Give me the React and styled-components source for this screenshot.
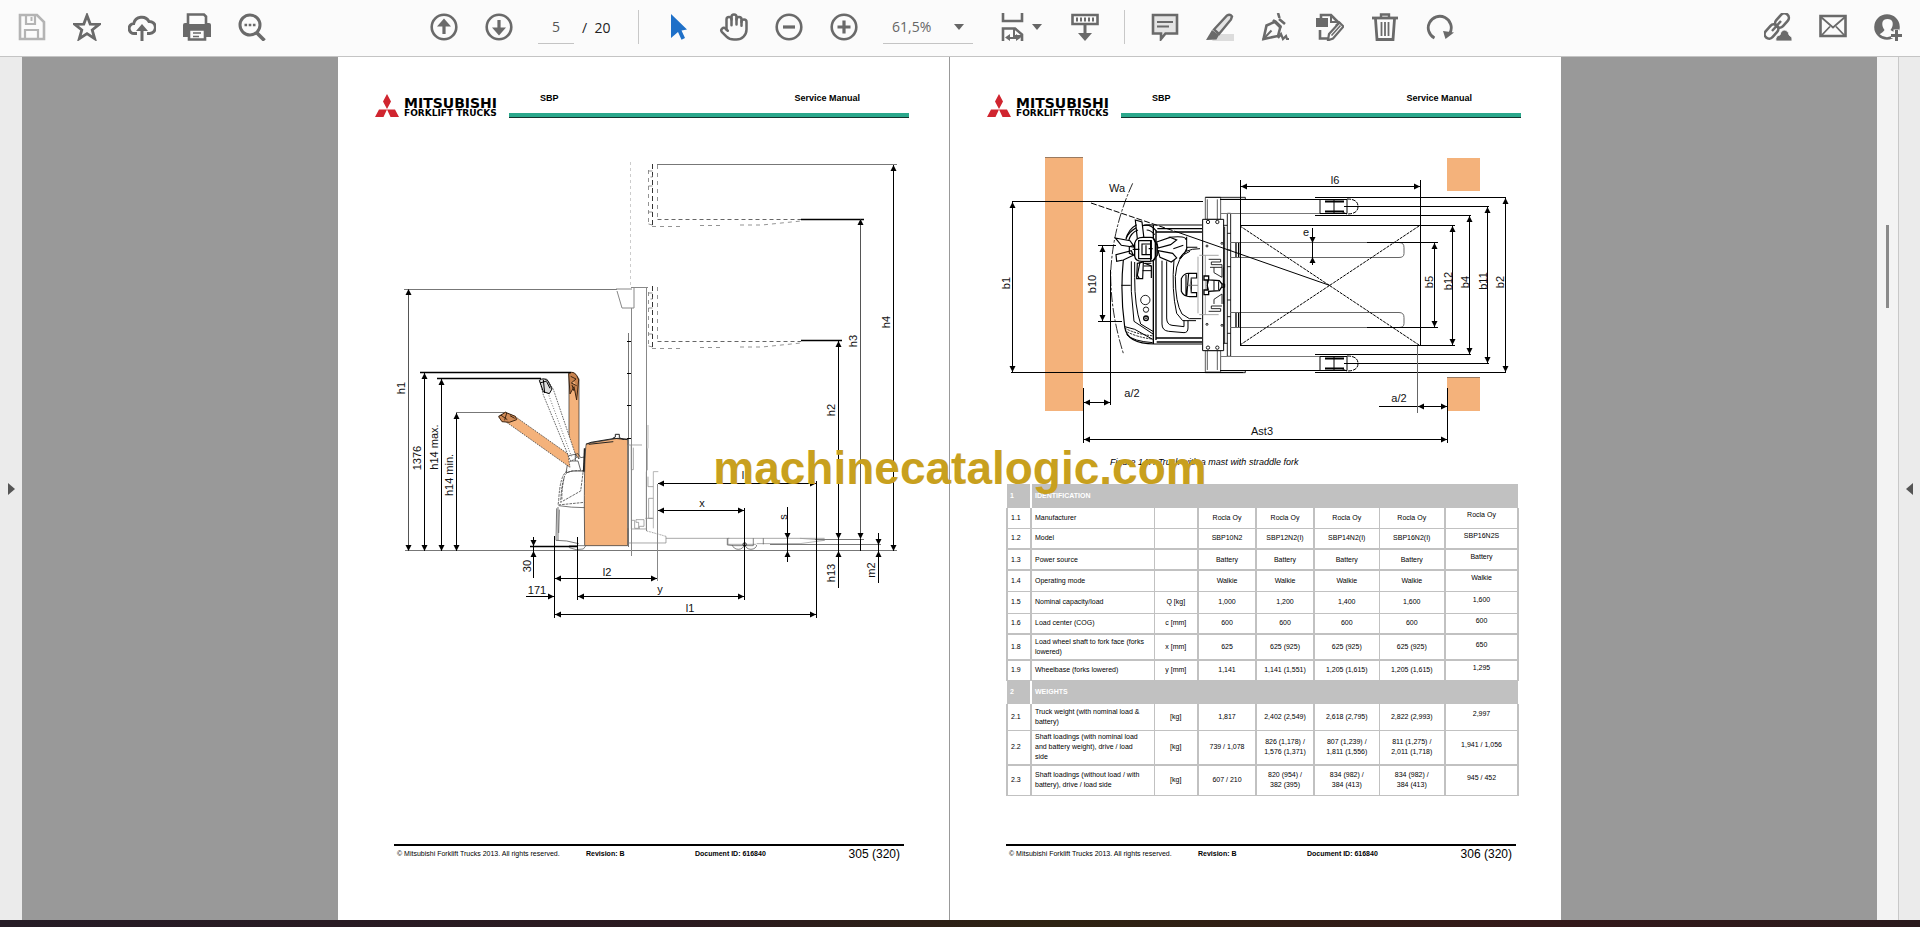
import React, { useState } from 'react';
import styled, { createGlobalStyle } from 'styled-components';
import { Hand } from 'lucide-react';

const specRows = [
  { section: '1', title: 'IDENTIFICATION' },
  { no: '1.1', h: 20, thin: true, name: 'Manufacturer', unit: '', values: ['Rocla Oy', 'Rocla Oy', 'Rocla Oy', 'Rocla Oy', 'Rocla Oy'] },
  { no: '1.2', h: 21, name: 'Model', unit: '', values: ['SBP10N2', 'SBP12N2(I)', 'SBP14N2(I)', 'SBP16N2(I)', 'SBP16N2S'] },
  { no: '1.3', h: 21, name: 'Power source', unit: '', values: ['Battery', 'Battery', 'Battery', 'Battery', 'Battery'] },
  { no: '1.4', h: 21, thin: true, name: 'Operating mode', unit: '', values: ['Walkie', 'Walkie', 'Walkie', 'Walkie', 'Walkie'] },
  { no: '1.5', h: 22, thin: true, name: 'Nominal capacity/load', unit: 'Q [kg]', values: ['1,000', '1,200', '1,400', '1,600', '1,600'] },
  { no: '1.6', h: 21, name: 'Load center (COG)', unit: 'c [mm]', values: ['600', '600', '600', '600', '600'] },
  { no: '1.8', h: 26, name: 'Load wheel shaft to fork face (forks\nlowered)', unit: 'x [mm]', values: ['625', '625 (925)', '625 (925)', '625 (925)', '650'] },
  { no: '1.9', h: 20, thin: true, name: 'Wheelbase (forks lowered)', unit: 'y [mm]', values: ['1,141', '1,141 (1,551)', '1,205 (1,615)', '1,205 (1,615)', '1,295'] },
  { section: '2', title: 'WEIGHTS' },
  { no: '2.1', h: 26, thin: true, name: 'Truck weight (with nominal load &\nbattery)', unit: '[kg]', values: ['1,817', '2,402 (2,549)', '2,618 (2,795)', '2,822 (2,993)', '2,997'] },
  { no: '2.2', h: 35, name: 'Shaft loadings (with nominal load\nand battery weight), drive / load\nside', unit: '[kg]', values: ['739 / 1,078', '826 (1,178) /\n1,576 (1,371)', '807 (1,239) /\n1,811 (1,556)', '811 (1,275) /\n2,011 (1,718)', '1,941 / 1,056'] },
  { no: '2.3', h: 30, thin: true, name: 'Shaft loadings (without load / with\nbattery), drive / load side', unit: '[kg]', values: ['607 / 210', '820 (954) /\n382 (395)', '834 (982) /\n384 (413)', '834 (982) /\n384 (413)', '945 / 452'] },
];

const icons = {
  save: (
    <g stroke="#b4b4b4" fill="none" strokeWidth="2.6">
      <path d="M2 2h17l7 7v17H2z" />
      <path d="M8 2v9h9V2M7 26v-9h13v9" strokeWidth="2.2" />
      <path d="M13.500 4v4" strokeWidth="2" />
    </g>
  ),
  star: <path d="M14 2.500l3.200 8.600 9 .3-7 5.600 2.500 8.700L14 20.600l-7.700 5.100L8.800 17l-7-5.600 9-.3z" strokeWidth="2.800" />,
  cloud: (
    <g>
      <path d="M9 20.500H6.500a5 5 0 0 1-.8-10A8.300 8.300 0 0 1 21 8.500a6 6 0 0 1 .8 12H19" strokeWidth="3" />
      <path d="M14 28V15" strokeWidth="3" />
      <path d="M14 11l6 7H8z" fill="#6a6a6a" stroke="none" />
    </g>
  ),
  print: (
    <g>
      <path d="M0 12q0-2 2-2h24q2 0 2 2v12H0z" fill="#6a6a6a" stroke="none" />
      <path d="M5 11V1.500h16l2 2V11" fill="#fbfbfb" strokeWidth="2.600" />
      <path d="M6 16.500h16v10H6z" fill="#fbfbfb" strokeWidth="2.600" />
      <path d="M10 20h8M10 23.500h6" strokeWidth="1.600" />
    </g>
  ),
  find: (
    <g>
      <circle cx="12" cy="12" r="10" strokeWidth="3" />
      <path d="M18.500 19.500l8 8" strokeWidth="3.600" />
      <path d="M6.500 12h2.600M10.700 12h2.600M14.900 12h2.600" strokeWidth="2.600" />
    </g>
  ),
  up: (
    <g>
      <circle cx="14" cy="14" r="12.300" strokeWidth="2.600" />
      <path d="M14 21v-9" strokeWidth="3.200" />
      <path d="M14 5.500l7 8H7z" fill="#6a6a6a" stroke="none" />
    </g>
  ),
  down: (
    <g>
      <circle cx="14" cy="14" r="12.300" strokeWidth="2.600" />
      <path d="M14 7v9" strokeWidth="3.200" />
      <path d="M14 22.500l7-8H7z" fill="#6a6a6a" stroke="none" />
    </g>
  ),
  pointer: <path d="M6 1l16 15.500-5.500 1 3.500 7.500-3.500 1.700L13 19l-7 6z" fill="#1f70c8" stroke="none" />,
  minus: (
    <g>
      <circle cx="14" cy="14" r="12.300" strokeWidth="2.600" />
      <path d="M8 14h12" strokeWidth="3.200" />
    </g>
  ),
  plus: (
    <g>
      <circle cx="14" cy="14" r="12.300" strokeWidth="2.600" />
      <path d="M7.500 14h13M14 7.500v13" strokeWidth="3.200" />
    </g>
  ),
  fit: (
    <g>
      <path d="M4 0v8h19V0" strokeWidth="2.600" />
      <path d="M4 28V15.500h12l7 6V28" strokeWidth="2.600" />
      <path d="M15 15v8h8" strokeWidth="2" />
      <path d="M8 25h11" strokeWidth="2" />
      <path d="M11 21v7l-5-3.500zM17 21v7l5-3.500z" fill="#6a6a6a" stroke="none" />
    </g>
  ),
  scrolling: (
    <g>
      <path d="M1.500 2h25v9h-25z" strokeWidth="2.600" />
      <path d="M6 4.500v4M10 4.500v4M14 4.500v4M18 4.500v4M22 4.500v4" strokeWidth="2" />
      <path d="M14 12v10" strokeWidth="3" />
      <path d="M14 28l-7-8h14z" fill="#6a6a6a" stroke="none" />
    </g>
  ),
  comment: (
    <g>
      <path d="M2 2h24v18.500H14.500L10 26v-5.500H2z" fill="#e4e4e4" strokeWidth="2.600" />
      <path d="M6 9h16M6 13.500h12" strokeWidth="1.800" />
    </g>
  ),
  highlight: (
    <g>
      <path d="M11 21h17v7H6z" fill="#dcdcdc" stroke="none" />
      <path d="M8 16.500L21 2.500q3-2 5 1l-1 3-12 14.500z" fill="#e4e4e4" strokeWidth="2.400" />
      <path d="M6 17l7 5-2.500 4.500L0 27z" fill="#6a6a6a" stroke="none" />
    </g>
  ),
  sign: (
    <g>
      <path d="M2.500 26l3-13.500 9-4 5 5L17 23z" strokeWidth="2.600" />
      <path d="M2 26.500l8.500-9" strokeWidth="2" />
      <path d="M17 0l1.500 5M12 7l8 8M18 6l6 5" strokeWidth="2.600" />
      <path d="M17 25l3-4 2 5 3-3 1 3h2" strokeWidth="2.200" />
    </g>
  ),
  edit: (
    <g>
      <path d="M5 6V2h10l8 8-3 3M4 17v8.500h8" strokeWidth="2.600" />
      <path d="M0 5h12v9H0z" fill="#6a6a6a" stroke="none" />
      <path d="M15 2v7h7" strokeWidth="2" />
      <path d="M13 21L23.500 9.500l4 4L17 25.500l-5 1.800z" fill="#fbfbfb" strokeWidth="2.200" />
      <path d="M15.500 22.500l9-10" strokeWidth="1.600" />
    </g>
  ),
  trash: (
    <g>
      <path d="M1 5h26" strokeWidth="2.800" />
      <path d="M10 4V1.500h8V4" strokeWidth="2.400" />
      <path d="M4.500 6l1.500 20.500h16L23.500 6" strokeWidth="2.800" />
      <path d="M10.500 9v14M14 9v14M17.500 9v14" strokeWidth="1.800" />
    </g>
  ),
  rotate: (
    <g>
      <path d="M8.500 25A11.500 11.500 0 1 1 24 20" strokeWidth="2.800" />
      <path d="M17 18l11 1.500-8.500 6.500z" fill="#6a6a6a" stroke="none" />
    </g>
  ),
  link: (
    <g>
      <rect x="10" y="3" width="16" height="9" rx="4.500" transform="rotate(-48 18 7.500)" strokeWidth="2.600" />
      <rect x="-.5" y="14" width="16" height="9" rx="4.500" transform="rotate(-48 7.500 18.500)" strokeWidth="2.600" />
      <path d="M8 18L17 8" strokeWidth="2.400" />
      <path d="M12 28q-1-5 4-6 1-5 5-5 4 1 4 5 4 2 3 6z" fill="#6a6a6a" stroke="#fbfbfb" strokeWidth=".8" />
    </g>
  ),
  mail: (
    <g>
      <path d="M1.500 3h25v20h-25z" strokeWidth="2.600" />
      <path d="M2 4l12 10.500L26 4M2 23l9-9.500M26 23l-9-9.500" strokeWidth="1.800" />
    </g>
  ),
  user: (
    <g>
      <circle cx="13" cy="14" r="11.500" strokeWidth="2.600" />
      <path d="M1.500 14a11.500 11.500 0 0 1 23 0q0 4-2 6-5-2-6-3 3-4 2-8-1-3-5-3t-5 3q-1 4 2 8-1 2-6 5-3-4-3-8z" fill="#6a6a6a" stroke="none" />
      <path d="M22.500 16.500v11M17 22h11" stroke="#fbfbfb" strokeWidth="6" />
      <path d="M22.500 17v11M17 22.500h11" strokeWidth="3" />
    </g>
  ),
};

function Tool({ name, label, disabled }) {
  return (
    <ToolButton type="button" aria-label={label} disabled={disabled}>
      <svg width="28" height="28" viewBox="0 0 28 28" fill="none" stroke="#6a6a6a">
        {icons[name]}
      </svg>
    </ToolButton>
  );
}

function Caret() {
  return (
    <svg width="10" height="6" viewBox="0 0 10 6">
      <path d="M0 0h10L5 6z" fill="#666" />
    </svg>
  );
}

function Toolbar() {
  const [page, setPage] = useState('5');
  const [zoom, setZoom] = useState('61,5%');

  return (
    <Bar>
      <Group>
        <Tool name="save" label="Save" disabled />
        <Tool name="star" label="Add to favourites" />
        <Tool name="cloud" label="Upload to cloud" />
        <Tool name="print" label="Print" />
        <Tool name="find" label="Find" />
      </Group>
      <MainGroup>
        <Tool name="up" label="Previous page" />
        <Tool name="down" label="Next page" />
        <PageInput aria-label="Page number" value={page} onChange={(e) => setPage(e.target.value)} />
        <PageTotal>/&nbsp; 20</PageTotal>
        <Separator />
        <Tool name="pointer" label="Select" />
        <ToolButton type="button" aria-label="Hand tool">
          <Hand size={30} color="#6a6a6a" strokeWidth={2} />
        </ToolButton>
        <Tool name="minus" label="Zoom out" />
        <Tool name="plus" label="Zoom in" />
        <ZoomBox>
          <select aria-label="Zoom" value={zoom} onChange={(e) => setZoom(e.target.value)}>
            <option>61,5%</option>
            <option>100%</option>
          </select>
          <Caret />
        </ZoomBox>
        <FitButton type="button" aria-label="Fit page">
          <svg width="28" height="28" viewBox="0 0 28 28" fill="none" stroke="#6a6a6a">
            {icons.fit}
          </svg>
          <Caret />
        </FitButton>
        <Tool name="scrolling" label="Page display" />
        <Separator />
        <Tool name="comment" label="Comment" />
        <Tool name="highlight" label="Highlight" />
        <Tool name="sign" label="Sign" />
        <Tool name="edit" label="Fill in form" />
        <Tool name="trash" label="Delete" />
        <Tool name="rotate" label="Rotate" />
      </MainGroup>
      <EndGroup>
        <Tool name="link" label="Share link" />
        <Tool name="mail" label="Send by email" />
        <Tool name="user" label="Invite people" />
      </EndGroup>
    </Bar>
  );
}

function Head({ x, y, dir }) {
  const turn = { up: 0, right: 90, down: 180, left: 270 }[dir];
  return <path d="M0 0l3 6h-6z" fill="#000" stroke="none" transform={`translate(${x} ${y}) rotate(${turn})`} />;
}

// vertical and horizontal dimension lines with a head at each end
function VDim({ x, y1, y2 }) {
  return (
    <g>
      <path d={`M${x} ${y1}V${y2}`} />
      <Head x={x} y={y1} dir="up" />
      <Head x={x} y={y2} dir="down" />
    </g>
  );
}

function HDim({ y, x1, x2 }) {
  return (
    <g>
      <path d={`M${x1} ${y}H${x2}`} />
      <Head x={x1} y={y} dir="left" />
      <Head x={x2} y={y} dir="right" />
    </g>
  );
}

function Label({ x, y, up, children }) {
  return (
    <DrawingText x={x} y={y} transform={up ? `rotate(-90 ${x} ${y})` : undefined}>
      {children}
    </DrawingText>
  );
}

function RaisedCarriage({ y }) {
  return (
    <g transform={`translate(0 ${y})`} stroke="#666">
      <path d="M652.500 0v63" stroke="#333" strokeDasharray="5 3" />
      <path d="M657.500 1v54M648.500 6v54M648.500 7h4v6h-4M648.500 22h4M648.500 48h4M648.500 60l4 1" strokeDasharray="4 4" strokeWidth=".7" />
      <path d="M657.500 55.500H801" strokeDasharray="4 3" />
      <path d="M652 62.500h32M700 61.500h23M740 61h22l39-4" strokeDasharray="4 4" strokeWidth=".7" />
    </g>
  );
}

function SideView() {
  return (
    <Drawing viewBox="338 150 611 480" role="img" aria-label="Side view dimensions">
      <path d="M404 289.500H617M405 550.500H897M657 164.500H897M456 412.500H506" stroke="#777" />
      <path d="M630.500 162V288" stroke="#ccc" strokeDasharray="3 3" />
      <RaisedCarriage y={164} />
      <RaisedCarriage y={286} />
      <g stroke="#888">
        <path d="M616 289h16M617 291l5 17h12v-20M631 287.500h17" />
        <path d="M631.500 308V556M646.500 288V531" />
        <path d="M628.500 333V547" stroke="#777" />
      </g>
      <path d="M627 341.500h4M627 373.500h4M627 405.500h4M627 438.500h4" />

      <g transform="translate(490 365) scale(.3333)" strokeWidth="2.200">
        <path d="M237 26q14-10 30 16v240l-30-40z" fill="#f4b27b" stroke="#333" />
        <path d="M236 25q20-12 30 20l-6 60-8-40-12 22zM242 34l16 8-14 12 16 8M246 60l6 18" strokeWidth="3" stroke="#3b2412" fill="#c8834f" />
        <path d="M26 154l20-13 30 14 158 112 6 40L50 172z" fill="#f4b27b" stroke="#333" strokeDasharray="5 3" />
        <path d="M26 155l20-13 30 12 4 10-22 8-22-2zM32 150l20 14M50 144l-6 22M60 152l14 8" strokeWidth="3" stroke="#3b2412" fill="#d28c58" />
        <path d="M150 50l20-9 20 32 70 206-18 10L160 90z" stroke="#333" fill="#fff" strokeDasharray="5 3" />
        <path d="M174 84l70 190" stroke="#444" strokeDasharray="3 5" />
        <path d="M148 46q14-10 26 2l12 24-8 14-18-6zM150 54l20-6M160 44l4 40M170 50l10 20" strokeWidth="3" fill="#ddd" />
        <path d="M236 272l28-6 8 12 12-2v42h-38l-18 6 4-24M240 288h24l8 28M256 268v20" stroke="#333" />
        <path d="M232 318q-22 10-26 90l-2 12 80-8M284 318q-48-4-58 10-12 28-14 84l60-34 8-62M222 340q-8 40-6 64" stroke="#333" strokeDasharray="8 3" />
        <path d="M204 426v100M284 428q-40 0-78-6M208 434l-2 70M200 430l-2 96 32 2 36 8" stroke="#444" />
        <path d="M284 542l-1-110q0-170 6-196l94-16 30 2v320z" fill="#f4b27b" stroke="#333" />
        <path d="M289 238l14-6 72-12 38 4M368 220l8-4v-8h12v10l14 6M296 238l74-8" stroke="#222" strokeWidth="3" fill="none" />
        <path d="M284 250l-3 70" strokeWidth="5" stroke="#222" />
        <path d="M238 542h50l-8 10q-22 6-42-4z" fill="#fff" stroke="#555" />
        <path d="M414 240h42M424 240v74h6v-66M414 240v250M424 492h45V320M424 240v252M472 250v66M426 466h8v24h12v-18h-8v-8h24v20h-14v8M466 460h22M474 335v30h16M490 400h-14v60h14" stroke="#888" />
        <path d="M474 180v70M505 320h-15v170" stroke="#999" />
        <path d="M416 534h112v-20l-58-16M528 520h190M714 520v18h84M714 520h290M800 536h130" stroke="#888" />
        <path d="M474 500l54 14" stroke="#fff" strokeWidth="3" strokeDasharray="4 4" />
        <path d="M712 520v20l18 2h60v-22M820 520v18M728 540a17 13 0 0 0 34 0M766 540a17 13 0 0 0 34 0" stroke="#555" />
        <path d="M930 520l74 6-74 10" stroke="#999" />
        <circle cx="764" cy="538" r="5" />
      </g>

      <path d="M801 219.500H864M801 340.500H842M420 372.500H571M437 378.500H541M530 546.500H578" strokeWidth="1.500" />
      <path d="M815 539.500H864M770 544.500H881" stroke="#777" />
      <path d="M554.500 536V618M577.500 537V600M744.500 508V600M816.500 481V618" />
      <path d="M657.500 484V581" stroke="#888" />
      <g stroke="#555">
        <VDim x={408.5} y1={289} y2={551} />
        <VDim x={860.5} y1={219} y2={539} />
      </g>
      <VDim x={424.5} y1={373} y2={551} />
      <VDim x={441.5} y1={379} y2={551} />
      <VDim x={456.5} y1={413} y2={551} />
      <VDim x={893.5} y1={165} y2={551} />
      <VDim x={838.5} y1={341} y2={539} />
      <path d="M838.500 539V588M787.500 507V562M878.500 533V583M533.500 537V578M526 596.500H554M860.500 539V551" />
      <Head x={838.5} y={551} dir="up" />
      <Head x={787.5} y={539} dir="down" />
      <Head x={787.5} y={551} dir="up" />
      <Head x={878.5} y={545} dir="down" />
      <Head x={878.5} y={551} dir="up" />
      <Head x={533.5} y={546} dir="down" />
      <Head x={533.5} y={551} dir="up" />
      <Head x={554} y={596.5} dir="right" />
      <HDim y={483.5} x1={658} x2={816} />
      <HDim y={510.5} x1={658} x2={744} />
      <HDim y={578.5} x1={555} x2={657} />
      <HDim y={596.5} x1={578} x2={744} />
      <HDim y={614.5} x1={555} x2={816} />

      <Label x={405} y={388} up>h1</Label>
      <Label x={421} y={458} up>1376</Label>
      <Label x={438} y={447} up>h14 max.</Label>
      <Label x={453} y={475} up>h14 min.</Label>
      <Label x={835} y={410} up>h2</Label>
      <Label x={857} y={341} up>h3</Label>
      <Label x={890} y={322} up>h4</Label>
      <Label x={835} y={573} up>h13</Label>
      <Label x={875} y={570} up>m2</Label>
      <Label x={787} y={517} up>s</Label>
      <Label x={531} y={566} up>30</Label>
      <Label x={537} y={594}>171</Label>
      <Label x={607} y={576}>l2</Label>
      <Label x={660} y={593}>y</Label>
      <Label x={690} y={612}>l1</Label>
      <Label x={702} y={507}>x</Label>
      <Label x={743} y={479}>l</Label>
    </Drawing>
  );
}

function StraddleLeg({ y }) {
  return (
    <g transform={`translate(0 ${y})`}>
      <path d="M1320 199.500h27v14h-27zM1334 199.500v14" fill="#fff" />
      <path d="M1325 201.500h19M1325 211.500h19" strokeWidth="2" />
      <path d="M1347 199q11 0 11 7.500t-11 7.500l-5-2" strokeDasharray="4 1" />
    </g>
  );
}

function TopView() {
  return (
    <Drawing viewBox="950 150 611 300" role="img" aria-label="Top view dimensions">
      <g fill="#f4b27b" stroke="none">
        <path d="M1045 157h38v254h-38zM1447 158h33v33h-33zM1447 377h33v34h-33z" />
        <path d="M1045 157h38v1h-38zM1447 377h33v1h-33z" fill="#9a7a60" />
      </g>

      <g transform="translate(1090 180) scale(.3333)" strokeWidth="2.600">
        <path d="M128 10q-60 130-66 270 0 120 38 240" strokeWidth="2.500" strokeDasharray="30 5 8 5" />
        {/* hood and bumper */}
        <path d="M100 240q-10 100 4 200 6 52 90 52h142M336 135H190q-60-4-82 40" strokeWidth="3.500" />
        <path d="M124 244q-4 90 8 180l60 40M134 246v46q0 90 18 140l40 24M104 440l30 8 54 30M110 464q20 20 78 24M122 316H94" strokeWidth="3" />
        <path d="M104 444q30 18 88 24M112 456q30 16 80 22" strokeDasharray="7 3" />
        <path d="M190 135v357M198 150v330M202 146h134M200 156h136M200 474h136M200 486h136" strokeWidth="4" />
        {/* battery cover */}
        <path d="M216 242v190q0 20 20 22l46 4q12 0 12-14v-22M230 244v170q0 20 16 22l36 4v-20M252 240q-8 90 8 160l18 22h40M300 214q-40 12-44 76 0 80 20 112l22 14h36M330 206q-50 0-60 30" strokeWidth="3" />
        <path d="M290 170v40l-22 26M236 172q54-6 52 8M250 206l30-10M322 202h-30l-10 20" strokeWidth="3.200" />
        <path d="M274 296q8-18 26-16h20v14h-16v44h16v12h-20q-20 0-26-16zM288 284v64M296 280l-6 70" strokeWidth="3.500" />
        <path d="M290 316h34M304 294q-8 22 0 44" stroke="#666" />
        {/* tiller head */}
        <path d="M136 120l20 6 6 50h-20zM142 250l18-4-2 50h-18zM76 174l44 8 14 20-40-6zM80 244l-2-20 46-12 6 14-30 14zM200 186l40-14 20 8-18 14-38 10zM204 212l44 8 12 14-16 12-34-14z" fill="#fff" strokeWidth="3.500" />
        <path d="M134 190q4-18 24-18h24q12 0 14 16v40q0 16-16 16h-24q-20 0-22-16z" fill="#fff" strokeWidth="4" />
        <path d="M146 182h38v54h-38zM156 192h26v32h-26zM108 178q6-30 32-44M116 182q6-24 28-32M162 136q20-4 36 16M170 150q12 0 24 14M132 196l-14 4v20l14 6M168 196v26M190 176l12 20v30l-12 14M164 250l20 8v36M150 246l-8 40 6 10" strokeWidth="3.500" />
        <path d="M182 182v60M176 206h12M148 208h-20" strokeWidth="4" />
        <path d="M160 250h24M162 258h22M158 272h26" strokeWidth="3" />
        <circle cx="166" cy="360" r="14" />
        <circle cx="168" cy="389" r="8" />
        <circle cx="168" cy="415" r="7" strokeWidth="4" />
        <circle cx="168" cy="415" r="2" />
        {/* mast */}
        <path d="M346 52h46v66h-46zM346 512h46v64h-46zM352 58v60M382 58v60M352 512v58M382 512v58" stroke="#444" fill="#fff" />
        <path d="M338 118h63v394h-63z" fill="#fff" strokeWidth="3" />
        <path d="M412 100h10v429h-10zM400 136h12M400 490h12M404 140v350M412 160h10M412 210h10M412 260h10M412 360h10M412 410h10M412 460h10" />
        <path d="M328 226h58M328 404h58M346 226v178M324 230v170" stroke="#999" />
        <path d="M356 238h36v8h-28v8h32v8h-36M356 394h36v-8h-28v-8h32M372 262v16l24 14v-30M372 372v-14l24-16v30M400 262v110" strokeWidth="2.500" />
        <path d="M342 288h14v12l32 2 8 10v8l-8 12-32 2v10h-14v-14h10v-30h-10z" fill="#fff" strokeWidth="4" />
        <path d="M356 300q-8 16 0 32M372 302v30M386 304v26M396 312h8v10h-8" strokeWidth="3" />
        <circle cx="354" cy="126" r="5" />
        <circle cx="382" cy="126" r="5" />
        <circle cx="354" cy="503" r="5" />
        <circle cx="382" cy="503" r="5" />
        <circle cx="351" cy="198" r="3" />
        <circle cx="351" cy="433" r="3" />
        <circle cx="396" cy="190" r="3" />
        <circle cx="396" cy="436" r="3" />
        <path d="M438 188v44M446 188v44M438 398v44M446 398v44" strokeWidth="4" />
        <path d="M346 52h120v6H392M346 578h120v-6H392" />
      </g>

      <path d="M1220 199.500H1320M1220 370.500H1320" />
      <path d="M1220 213.500H1320M1220 356.500H1320" stroke="#777" />
      <StraddleLeg y={0} />
      <StraddleLeg y={157} />
      <path d="M1230 242.500H1399q5 0 5 5v6q0 4-5 4H1230M1230 312.500H1399q5 0 5 5v6q0 4-5 4H1230" stroke="#666" />
      <path d="M1240 226L1419 345M1240 345L1419 226" strokeDasharray="3 1" />
      <path d="M1091 203L1180 233" strokeDasharray="6 2" />
      <path d="M1180 233L1330 285.500" />

      <path d="M1012 201.500H1203M1011 372.500H1243M1315 197.500H1506M1315 372.500H1506M1344 206.500H1489M1344 363.500H1489M1315 215.500H1471M1315 354.500H1471M1240 225.500H1455M1240 345.500H1455M1367 242.500H1438M1367 327.500H1438" />
      <path d="M1098 245.500H1116M1098 321.500H1122M1110.500 270V405M1083.500 388V443M1447.500 388V443M1240.500 180V345M1420.500 180V345M1379 406.500H1418" />
      <path d="M1417.500 346V413" stroke="#666" />
      <VDim x={1012.5} y1={202} y2={372} />
      <VDim x={1102.5} y1={246} y2={321} />
      <VDim x={1434.5} y1={243} y2={327} />
      <VDim x={1452.5} y1={226} y2={345} />
      <VDim x={1469.5} y1={216} y2={354} />
      <VDim x={1487.5} y1={207} y2={363} />
      <VDim x={1505.5} y1={198} y2={372} />
      <path d="M1312.500 228V265" />
      <Head x={1312.5} y={243} dir="down" />
      <Head x={1312.5} y={257} dir="up" />
      <HDim y={186.5} x1={1241} x2={1420} />
      <HDim y={402.5} x1={1084} x2={1110} />
      <HDim y={406.5} x1={1418} x2={1447} />
      <HDim y={439.5} x1={1084} x2={1447} />

      <Label x={1117} y={192}>Wa</Label>
      <Label x={1335} y={184}>l6</Label>
      <Label x={1306} y={236}>e</Label>
      <Label x={1132} y={397}>a/2</Label>
      <Label x={1399} y={402}>a/2</Label>
      <Label x={1262} y={435}>Ast3</Label>
      <Label x={1010} y={283} up>b1</Label>
      <Label x={1096} y={284} up>b10</Label>
      <Label x={1433} y={282} up>b5</Label>
      <Label x={1452} y={281} up>b12</Label>
      <Label x={1469} y={282} up>b4</Label>
      <Label x={1487} y={281} up>b11</Label>
      <Label x={1504} y={282} up>b2</Label>
    </Drawing>
  );
}

function PageHeader() {
  return (
    <Header>
      <Brand>
        <svg width="24" height="23" viewBox="0 0 24 23" fill="#d0252f">
          <path d="M12 0l4 7.500-4 7.500-4-7.500zM4 15.500h8L8.500 23H0zM12 15.500h8l4 7.500h-8.500z" />
        </svg>
        <BrandName>
          <strong>MITSUBISHI</strong>
          <span>FORKLIFT TRUCKS</span>
        </BrandName>
      </Brand>
      <Titles>
        <span>SBP</span>
        <span>Service Manual</span>
      </Titles>
    </Header>
  );
}

function PageFooter({ number }) {
  return (
    <Footer>
      <span>© Mitsubishi Forklift Trucks 2013. All rights reserved.</span>
      <b>Revision: B</b>
      <b>Document ID: 616840</b>
      <PageNumber>{number} (320)</PageNumber>
    </Footer>
  );
}

function SpecTable() {
  return (
    <Table>
      <colgroup>
        {[24, 123, 44, 58, 58, 65, 66, 73].map((w, i) => (
          <Col key={i} $w={w} />
        ))}
      </colgroup>
      <tbody>
        {specRows.map((row) =>
          row.section ? (
            <SectionRow key={row.section}>
              <th>{row.section}</th>
              <th colSpan={7}>{row.title}</th>
            </SectionRow>
          ) : (
            <Row key={row.no} $h={row.h} $thin={row.thin}>
              <td>{row.no}</td>
              <td>{row.name}</td>
              <td>{row.unit}</td>
              {row.values.map((value, i) => (
                <td key={i}>{value}</td>
              ))}
            </Row>
          )
        )}
      </tbody>
    </Table>
  );
}

function App() {
  return (
    <Shell>
      <GlobalStyle />
      <Toolbar />
      <Workspace>
        <SideRail type="button" aria-label="Open navigation pane">
          <svg width="7" height="12" viewBox="0 0 7 12">
            <path d="M0 0l7 6-7 6z" fill="#555" />
          </svg>
        </SideRail>
        <Viewer>
          <Page>
            <PageHeader />
            <SideView />
            <PageFooter number="305" />
          </Page>
          <Page>
            <PageHeader />
            <TopView />
            <Caption>Figure 147: Truck with a mast with straddle fork</Caption>
            <SpecTable />
            <PageFooter number="306" />
          </Page>
        </Viewer>
        <ScrollTrack>
          <ScrollThumb />
        </ScrollTrack>
        <SideRail type="button" aria-label="Open tools pane" $end>
          <svg width="7" height="12" viewBox="0 0 7 12">
            <path d="M7 0L0 6l7 6z" fill="#555" />
          </svg>
        </SideRail>
        <Watermark>machinecatalogic.com</Watermark>
      </Workspace>
      <Taskbar />
    </Shell>
  );
}

const GlobalStyle = createGlobalStyle`
  * {
    box-sizing: border-box;
  }
  body {
    margin: 0;
    font-family: "Liberation Sans", Arial, sans-serif;
    color: #000;
  }
  button, input, select {
    font: inherit;
    color: inherit;
    border: 0;
    padding: 0;
    background: none;
  }
`;

const Shell = styled.div`
  display: flex;
  flex-direction: column;
  min-height: 100vh;
`;

const Bar = styled.header`
  display: flex;
  align-items: center;
  height: 57px;
  padding: 0 5px 2px 4px;
  background: #fbfbfb;
  border-bottom: 1px solid #c4c4c4;
  font-family: "Open Sans", "Noto Sans", sans-serif;
  font-size: 14px;
`;

const Group = styled.div`
  display: flex;
  align-items: center;
`;

const MainGroup = styled(Group)`
  margin-left: 137px;
`;

const EndGroup = styled(Group)`
  margin-left: auto;
`;

const ToolButton = styled.button`
  display: flex;
  align-items: center;
  justify-content: center;
  width: 55px;
  height: 40px;
`;

const FitButton = styled(ToolButton)`
  justify-content: flex-start;
  width: 58px;
  gap: 5px;
  margin-left: 26px;
`;

const PageInput = styled.input`
  width: 36px;
  height: 34px;
  margin-left: 12px;
  border-bottom: 1px solid #c4c4c4;
  text-align: center;
  color: #555;
`;

const PageTotal = styled.span`
  width: 52px;
  padding-left: 8px;
  color: #222;
`;

const Separator = styled.div`
  width: 1px;
  height: 34px;
  margin: 0 12px;
  background: #c8c8c8;
`;

const ZoomBox = styled.div`
  display: flex;
  align-items: center;
  width: 90px;
  height: 34px;
  margin-left: 12px;
  border-bottom: 1px solid #c4c4c4;
  color: #666;
  select {
    appearance: none;
    width: 71px;
    padding-left: 9px;
  }
`;

const Workspace = styled.main`
  position: relative;
  display: flex;
  flex: 1;
  background: #999;
`;

const SideRail = styled.button`
  display: flex;
  align-items: center;
  justify-content: center;
  width: 22px;
  background: #ebebeb;
  border-left: ${(props) => (props.$end ? '1px solid #c8c8c8' : '0')};
`;

const Viewer = styled.div`
  display: flex;
  flex: 1;
  justify-content: center;
  gap: 1px;
`;

const Page = styled.section`
  display: flex;
  flex: 0 1 611px;
  flex-direction: column;
  padding-top: 35px;
  background: #fff;
`;

const Header = styled.div`
  display: flex;
  align-items: flex-end;
  height: 25px;
  margin: 0 40px 33px 37px;
`;

const Brand = styled.div`
  display: flex;
  align-items: flex-end;
  gap: 5px;
  width: 134px;
`;

const BrandName = styled.div`
  display: flex;
  flex-direction: column;
  font-family: "DejaVu Sans", sans-serif;
  font-weight: bold;
  white-space: nowrap;
  strong {
    font-size: 14px;
    line-height: 13px;
  }
  span {
    font-size: 9px;
    line-height: 7px;
  }
`;

const Titles = styled.div`
  display: flex;
  flex: 1;
  justify-content: space-between;
  height: 25px;
  padding: 0 49px 0 31px;
  border-bottom: 4px solid #2ba88c;
  box-shadow: 0 1px 0 #12322c;
  font-size: 9px;
  font-weight: bold;
  line-height: 12px;
`;

const Drawing = styled.svg`
  display: block;
  width: 100%;
  height: auto;
  fill: none;
  stroke: #000;
  stroke-width: 1px;
`;

const DrawingText = styled.text`
  font-size: 11px;
  text-anchor: middle;
  fill: #111;
  stroke: none;
`;

const Caption = styled.p`
  margin: 7px 0 17px 160px;
  font-size: 9px;
  font-style: italic;
  line-height: 10px;
`;

const Table = styled.table`
  width: 512px;
  margin-left: 56px;
  table-layout: fixed;
  border-collapse: collapse;
  font-size: 7px;
  line-height: 10px;
`;

const Col = styled.col`
  width: ${(props) => props.$w}px;
`;

const SectionRow = styled.tr`
  height: 24px;
  background: #c1c1c1;
  color: #fff;
  text-align: left;
  th {
    padding: 0 3px;
  }
  th:first-child {
    border-right: 2px solid #fff;
  }
`;

const Row = styled.tr`
  height: ${(props) => props.$h}px;
  td {
    padding: 0 3px;
    border: 2px solid #c1c1c1;
    border-bottom-width: ${(props) => (props.$thin ? 1 : 2)}px;
    border-top-width: 0;
    text-align: center;
    white-space: pre-line;
  }
  td:nth-child(-n + 2) {
    text-align: left;
  }
  td:nth-child(2),
  td:nth-child(6) {
    border-right-width: 1px;
  }
  td:nth-child(3),
  td:nth-child(7) {
    border-left-width: 1px;
  }
  td:last-child {
    padding-bottom: 5px;
  }
`;

const Footer = styled.footer`
  display: grid;
  grid-template-columns: 189px 109px 1fr auto;
  align-items: center;
  margin: auto 45px 58px 56px;
  padding: 0 4px 0 3px;
  border-top: 2px solid #000;
  font-size: 7px;
  line-height: 16px;
`;

const PageNumber = styled.span`
  font-size: 12px;
  line-height: 14px;
`;

const ScrollTrack = styled.div`
  width: 21px;
  padding: 168px 9px 0;
  background: #f3f3f3;
`;

const ScrollThumb = styled.div`
  height: 83px;
  background: #8a8a8a;
`;

const Watermark = styled.div`
  position: absolute;
  top: 388px;
  left: 50%;
  transform: translateX(-50%);
  color: #c8a01e;
  font-size: 46px;
  font-weight: bold;
  line-height: 46px;
  pointer-events: none;
`;

const Taskbar = styled.div`
  height: 7px;
  background: linear-gradient(90deg, #261c26, #2b1a20 35%, #2e2312 55%, #34191a 80%, #2a1a1c);
`;

export default App;
